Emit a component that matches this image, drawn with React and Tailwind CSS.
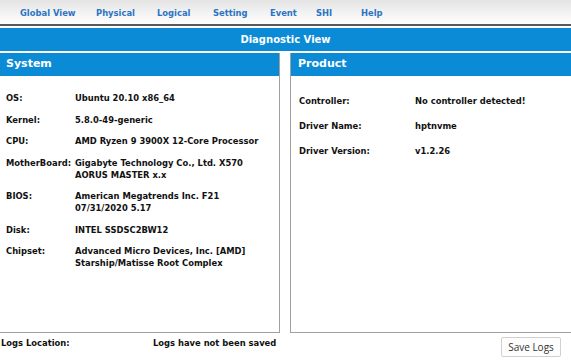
import React from "react";

const font = { fontFamily: '"DejaVu Sans", Verdana, sans-serif' };

const navItems = [
  ["Global View", "w-[76px]"],
  ["Physical", "w-[61px]"],
  ["Logical", "w-[56px]"],
  ["Setting", "w-[57px]"],
  ["Event", "w-[46px]"],
  ["SHI", "w-[45px]"],
  ["Help", "w-[40px]"],
];

const systemRows = [
  ["OS:", ["Ubuntu 20.10 x86_64"]],
  ["Kernel:", ["5.8.0-49-generic"]],
  ["CPU:", ["AMD Ryzen 9 3900X 12-Core Processor"]],
  ["MotherBoard:", ["Gigabyte Technology Co., Ltd. X570", "AORUS MASTER x.x"]],
  ["BIOS:", ["American Megatrends Inc. F21", "07/31/2020 5.17"]],
  ["Disk:", ["INTEL SSDSC2BW12"]],
  ["Chipset:", ["Advanced Micro Devices, Inc. [AMD]", "Starship/Matisse Root Complex"]],
];

const productRows = [
  ["Controller:", "No controller detected!"],
  ["Driver Name:", "hptnvme"],
  ["Driver Version:", "v1.2.26"],
];

export default function App() {
  return (
    <div className="w-[571px] h-[362px] bg-white overflow-hidden text-[#111]" style={font}>
      <div className="h-[26px] bg-gradient-to-b from-[#e4e4e4] to-white flex items-center pl-[20px] pt-[3px] border-b-2 border-[#5a5a5a]">
        {navItems.map(([t, w]) => (
          <div key={t} className={`${w} text-[8.4px] font-bold text-[#2b74c4] leading-none`}>{t}</div>
        ))}
      </div>
      <div className="mt-[2px] h-[23px] bg-[#0b8ad6] flex items-center justify-center text-white font-bold text-[10px]">
        Diagnostic View
      </div>
      <div className="mt-[2px] flex h-[280px]">
        <div className="w-[280px] border-r border-b border-[#a0a0a0] flex flex-col">
          <div className="h-[23px] bg-[#0b8ad6] text-white font-bold text-[11px] flex items-center pl-[6px]">System</div>
          <div className="pt-[16px] pl-[6px] flex flex-col gap-[9.5px]">
            {systemRows.map(([k, vals]) => (
              <div key={k} className="flex text-[8.4px] font-bold leading-[12px]">
                <div className="w-[69px] shrink-0">{k}</div>
                <div>
                  {vals.map((v) => (
                    <div key={v}>{v}</div>
                  ))}
                </div>
              </div>
            ))}
          </div>
        </div>
        <div className="ml-[10px] flex-1 border-l border-b border-[#a0a0a0] flex flex-col">
          <div className="h-[23px] bg-[#0b8ad6] text-white font-bold text-[11px] flex items-center pl-[7px]">Product</div>
          <div className="pt-[19px] pl-[8px] flex flex-col gap-[13px]">
            {productRows.map(([k, v]) => (
              <div key={k} className="flex text-[8.4px] font-bold leading-[12px]">
                <div className="w-[116px] shrink-0">{k}</div>
                <div>{v}</div>
              </div>
            ))}
          </div>
        </div>
      </div>
      <div className="flex items-start">
        <div className="pl-[1px] w-[153px] text-[8.4px] font-bold leading-[20px]">Logs Location:</div>
        <div className="text-[8.4px] font-bold leading-[20px]">Logs have not been saved</div>
        <div className="ml-auto mr-[10px] mt-[4px] w-[60px] h-[20px] border border-[#d0d0d0] rounded-[2px] bg-[#fdfdfd] flex items-center justify-center text-[10px] text-[#333]" style={{ fontFamily: '"Open Sans", sans-serif' }}>
          Save Logs
        </div>
      </div>
    </div>
  );
}
